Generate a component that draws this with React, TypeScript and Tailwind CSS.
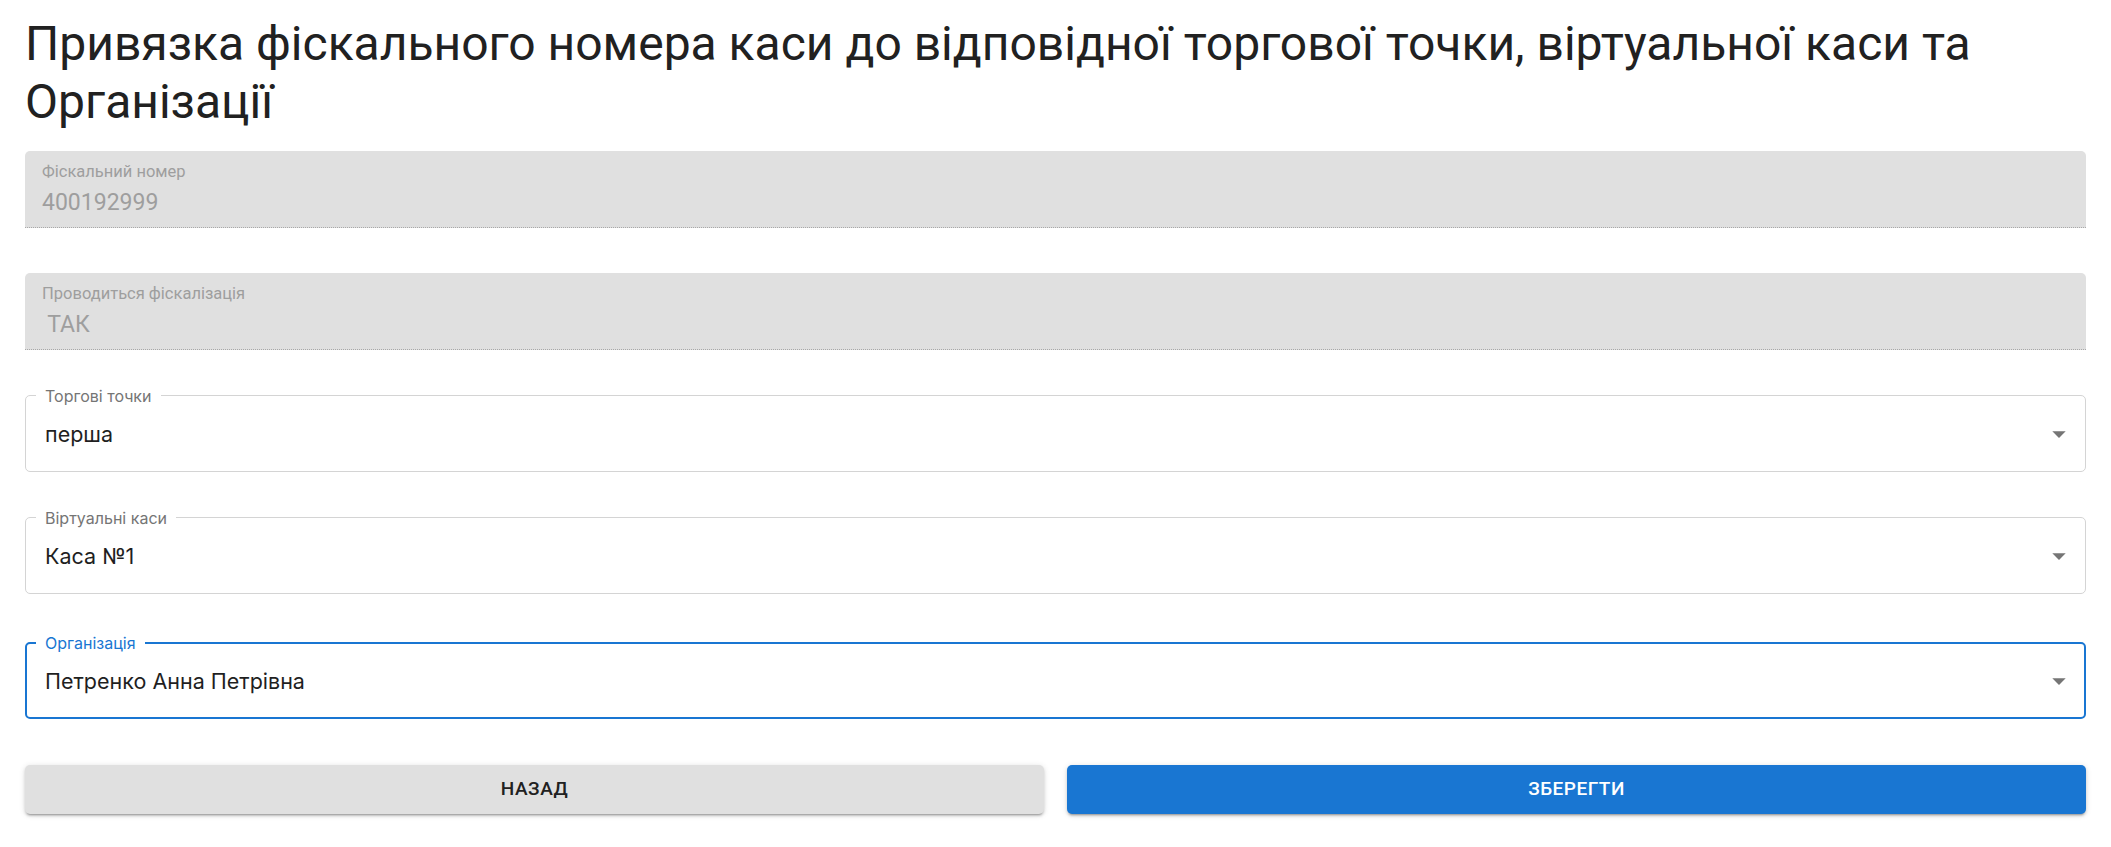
import React from "react";

interface FilledFieldProps {
  label: string;
  value: string;
}

function FilledField({ label, value }: FilledFieldProps) {
  return (
    <div className="h-[77px] bg-[#e0e0e0] rounded-t-[5px] border-b border-dotted border-[#a8a8a8] px-[17px] pt-[11px] flex flex-col">
      <span className="text-[16.5px] leading-[20px] text-[#9e9e9e]">{label}</span>
      <span className="mt-[8px] text-[23px] leading-[26px] text-[#9e9e9e] whitespace-pre">
        {value}
      </span>
    </div>
  );
}

interface SelectFieldProps {
  label: string;
  value: string;
  focused?: boolean;
}

function SelectField({ label, value, focused }: SelectFieldProps) {
  return (
    <div
      className={
        focused
          ? "relative h-[77px] rounded-[5px] border-2 border-[#1976d2] pl-[18px] pr-[9px] flex items-center justify-between"
          : "relative h-[77px] rounded-[5px] border border-[#d4d4d4] pl-[19px] pr-[10px] flex items-center justify-between"
      }
    >
      <span
        className={
          focused
            ? "absolute -top-[11px] left-[9px] px-[9px] bg-white text-[16px] leading-[20px] text-[#1976d2] font-['Inter',sans-serif]"
            : "absolute -top-[10px] left-[10px] px-[9px] bg-white text-[16px] leading-[20px] text-[#757575] font-['Inter',sans-serif]"
        }
      >
        {label}
      </span>
      <span className="text-[21.5px] leading-[26px] text-[#1f1f1f] font-['Inter',sans-serif]">
        {value}
      </span>
      <svg width="32" height="32" viewBox="0 0 24 24" className="text-[#757575]">
        <path d="M7 10l5 5 5-5z" fill="currentColor" />
      </svg>
    </div>
  );
}

const raised =
  "shadow-[0_3px_2px_-2px_rgba(0,0,0,0.25),0_2px_3px_0_rgba(0,0,0,0.14),0_1px_6px_0_rgba(0,0,0,0.12)]";

export default function App() {
  return (
    <div className="min-h-screen bg-white px-[25px] pt-[15px] font-['Roboto','Liberation_Sans',sans-serif]">
      <h1 className="text-[48px] leading-[58px] font-normal text-[#212121]">
        Привязка фіскального номера каси до відповідної торгової точки, віртуальної каси та
        <br />
        Організації
      </h1>

      <div className="mt-[20px] flex flex-col gap-[45px]">
        <FilledField label="Фіскальний номер" value="400192999" />
        <FilledField label="Проводиться фіскалізація" value=" ТАК" />
        <SelectField label="Торгові точки" value="перша" />
        <SelectField label="Віртуальні каси" value="Каса №1" />
        <div className="mt-[3px]">
          <SelectField label="Організація" value="Петренко Анна Петрівна" focused />
        </div>
      </div>

      <div className="mt-[46px] grid grid-cols-2 gap-[23px]">
        <button className={`h-[49px] rounded-[5px] bg-[#e0e0e0] text-[#212121] text-[19px] font-medium tracking-[0.5px] uppercase ${raised}`}>
          Назад
        </button>
        <button className={`h-[49px] rounded-[5px] bg-[#1976d2] text-white text-[19px] font-medium tracking-[0.5px] uppercase ${raised}`}>
          Зберегти
        </button>
      </div>
    </div>
  );
}
